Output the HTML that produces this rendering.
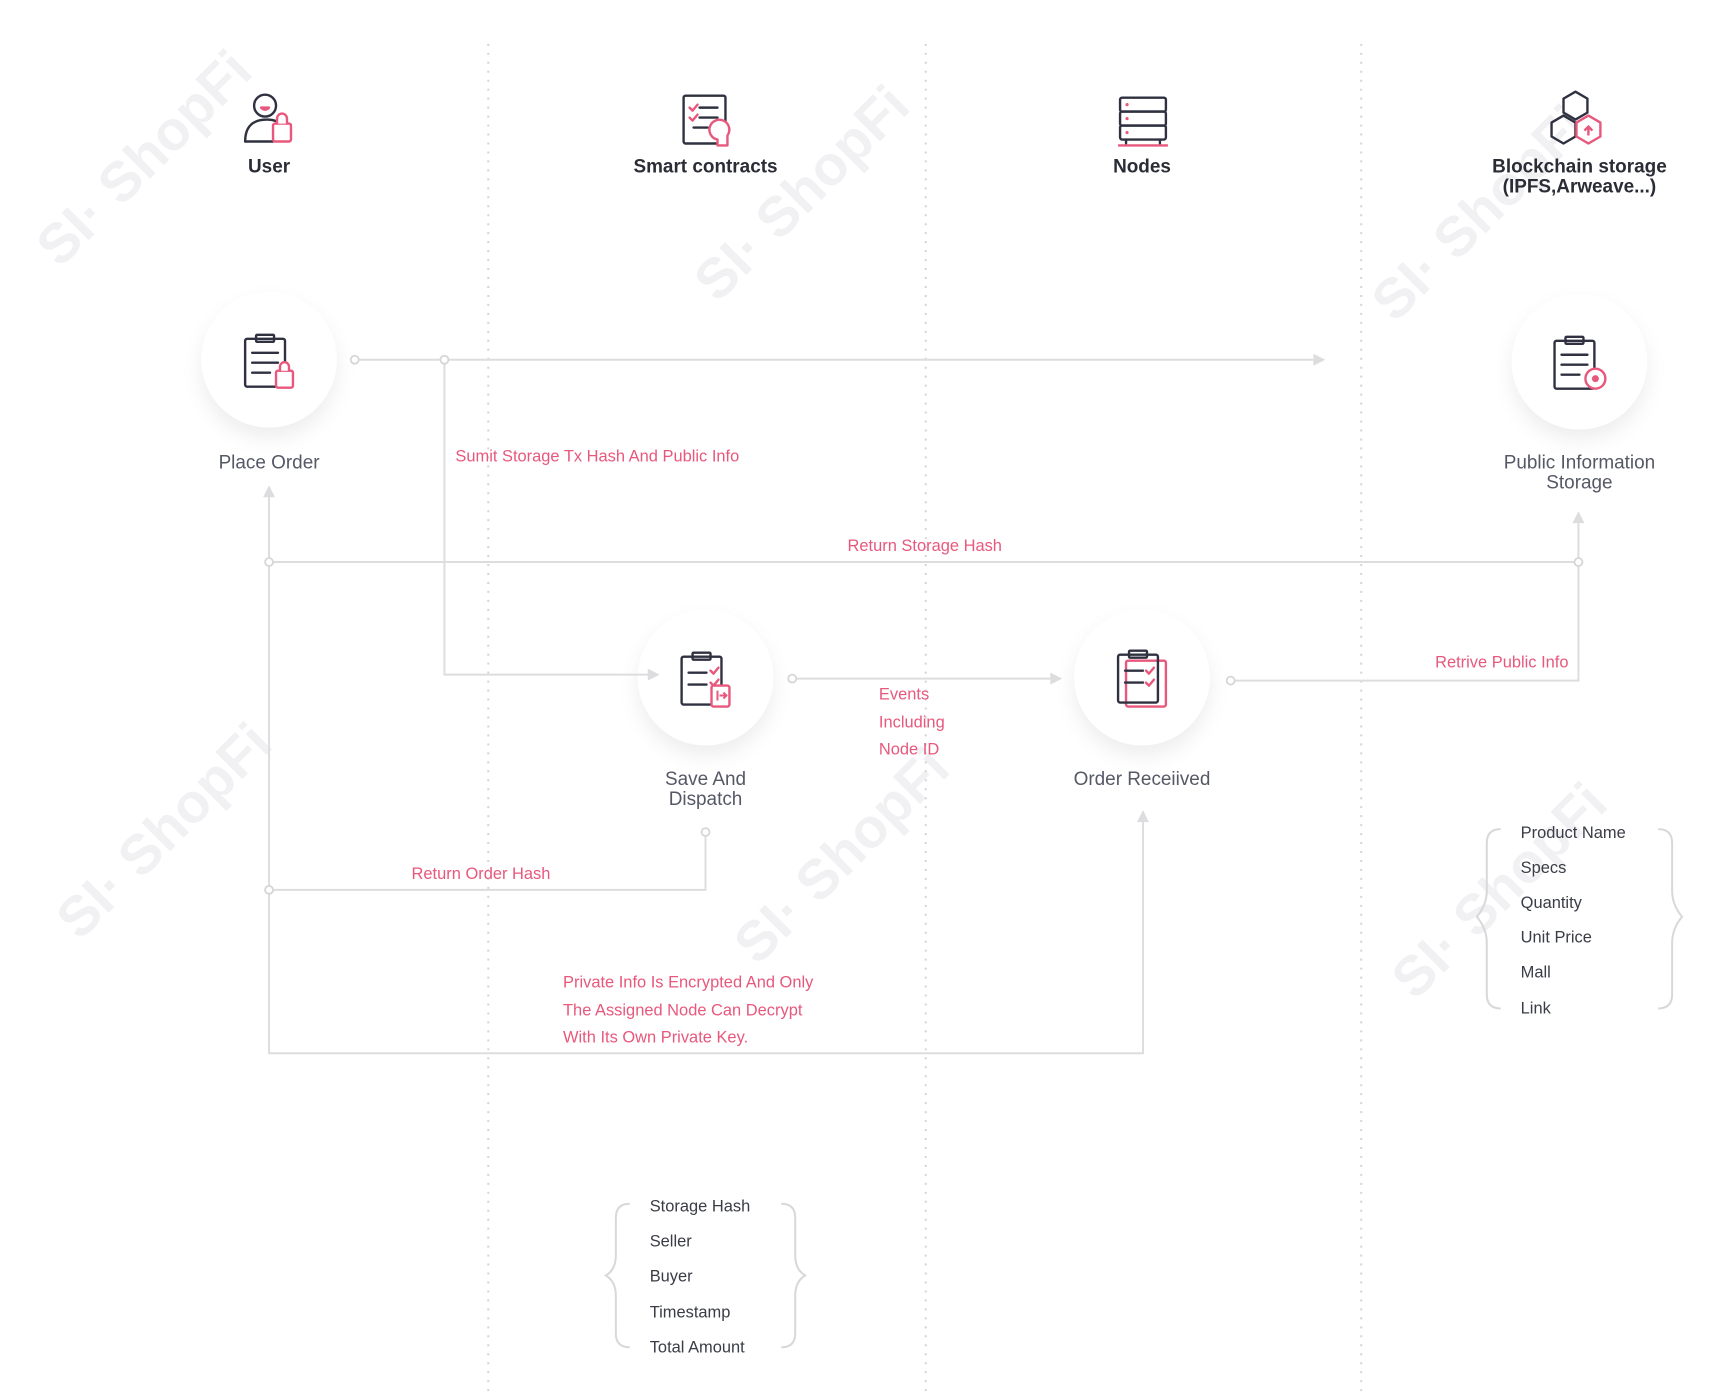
<!DOCTYPE html>
<html><head><meta charset="utf-8"><style>
html,body{margin:0;padding:0;background:#fff;width:1718px;height:1392px;overflow:hidden}
svg{display:block}
text{font-family:"Liberation Sans",sans-serif}
.h{font-weight:bold;font-size:19px;fill:#2a2c36;text-anchor:middle}
.l{font-size:19px;fill:#555966;text-anchor:middle}
.p{font-size:16.5px;fill:#e8587c}
.t{font-size:16.5px;fill:#3a3c46}
.wm{font-size:56px;font-weight:bold;fill:#f1f1f3}
.ln{stroke:#dddddf;stroke-width:2;fill:none}
.ic{stroke:#2f3140;stroke-width:2.4;fill:none;stroke-linecap:round;stroke-linejoin:round}
.pk{stroke:#e8587c;stroke-width:2.4;fill:#fff;stroke-linecap:round;stroke-linejoin:round}
</style></head><body>
<svg width="1718" height="1392" viewBox="0 0 1718 1392" xmlns="http://www.w3.org/2000/svg">
<defs>
<filter id="sh" x="-50%" y="-50%" width="200%" height="200%"><feDropShadow dx="0" dy="10" stdDeviation="10" flood-color="#000" flood-opacity="0.07"/></filter>
</defs>
<g transform="scale(0.9965)">
<g class="wm">
<text transform="translate(60,270) rotate(-45)">SI· ShopFi</text>
<text transform="translate(720,305) rotate(-45)">SI· ShopFi</text>
<text transform="translate(1400,325) rotate(-45)">SI· ShopFi</text>
<text transform="translate(80,945) rotate(-45)">SI· ShopFi</text>
<text transform="translate(760,970) rotate(-45)">SI· ShopFi</text>
<text transform="translate(1420,1005) rotate(-45)">SI· ShopFi</text>
</g>
<g stroke="#d4d4d8" stroke-width="2" stroke-dasharray="2,7">
<line x1="490" y1="44" x2="490" y2="1400"/>
<line x1="929" y1="44" x2="929" y2="1400"/>
<line x1="1366" y1="44" x2="1366" y2="1400"/>
</g>
<g fill="#fff" filter="url(#sh)">
<circle cx="270" cy="361" r="68"/>
<circle cx="1585" cy="363" r="68"/>
<circle cx="708" cy="680" r="68"/>
<circle cx="1146" cy="680" r="68"/>
</g>
<g class="ln">
<polyline points="360,361 1320,361"/>
<polyline points="446,361 446,677 652,677"/>
<polyline points="270,497 270,1057 1147,1057 1147,823"/>
<polyline points="270,564 1584,564"/>
<polyline points="1584,523 1584,683 1239,683"/>
<polyline points="799,681 1056,681"/>
<polyline points="708,840 708,893 270,893"/>
</g>
<g fill="#dddddf">
<polygon points="1318,355 1330,361 1318,367"/>
<polygon points="650,671 662,677 650,683"/>
<polygon points="1054,675 1066,681 1054,687"/>
<polygon points="264,499 270,487 276,499"/>
<polygon points="1578,525 1584,513 1590,525"/>
<polygon points="1141,825 1147,813 1153,825"/>
</g>
<g fill="#fff" stroke="#d6d6d8" stroke-width="1.8">
<circle cx="356" cy="361" r="4"/><circle cx="446" cy="361" r="4"/>
<circle cx="270" cy="564" r="4"/><circle cx="1584" cy="564" r="4"/>
<circle cx="795" cy="681" r="4"/><circle cx="1235" cy="683" r="4"/>
<circle cx="708" cy="835" r="4"/><circle cx="270" cy="893" r="4"/>
</g>
<g transform="translate(244,92)">
<circle class="ic" cx="22" cy="14" r="11"/><path class="pk" d="M18 16 q4 4 8 0 z" fill="#e8587c"/>
<path class="ic" d="M2 50 q0-22 22-22 q10 0 16 6"/><path class="ic" d="M2 50 h28"/>
<rect class="pk" x="30" y="32" width="18" height="18" rx="2"/><path class="pk" d="M34 32 v-5 a5 5 0 0 1 10 0 v5"/>
</g>
<g transform="translate(684,94)">
<rect class="ic" x="2" y="2" width="42" height="48" rx="2"/>
<path class="ic" d="M18 14 h18 M18 24 h18 M12 34 h14"/>
<path class="pk" d="M8 14 l3 3 l5 -6 M8 24 l3 3 l5 -6"/>
<path class="pk" d="M36 52 v-6 a10 10 0 1 1 10 -4 l0 10 z"/>
</g>
<g transform="translate(1122,96)">
<rect class="ic" x="2" y="2" width="46" height="14" rx="2"/><rect class="ic" x="2" y="16" width="46" height="14" rx="2"/><rect class="ic" x="2" y="30" width="46" height="14" rx="2"/>
<circle cx="9" cy="9" r="1.6" fill="#e8587c"/><circle cx="9" cy="23" r="1.6" fill="#e8587c"/><circle cx="9" cy="37" r="1.6" fill="#e8587c"/>
<path d="M8 44 v4 M42 44 v4" class="ic"/><path d="M0 50 h50" stroke="#e8587c" stroke-width="2.4"/>
</g>
<g transform="translate(1555,90)">
<polygon class="ic" points="26,2 38,9 38,23 26,30 14,23 14,9"/>
<polygon class="ic" points="14,26 26,33 26,47 14,54 2,47 2,33"/>
<polygon class="pk" points="39,26 51,33 51,47 39,54 27,47 27,33"/>
<path d="M39 46 v-8 M35 41 l4 -4 l4 4" stroke="#e8587c" stroke-width="2.4" fill="none"/>
</g>
<g transform="translate(246,336)">
<rect class="ic" x="0" y="4" width="40" height="48" rx="2"/><rect class="ic" x="11" y="0" width="18" height="7" rx="1" fill="#fff"/>
<path class="ic" d="M7 18 h26 M7 28 h26 M7 38 h18"/>
<rect class="pk" x="31" y="36" width="17" height="17" rx="2"/><path class="pk" d="M35 36 v-4 a4.5 4.5 0 0 1 9 0 v4"/>
</g>
<g transform="translate(1560,338)">
<rect class="ic" x="0" y="4" width="40" height="48" rx="2"/><rect class="ic" x="11" y="0" width="18" height="7" rx="1" fill="#fff"/>
<path class="ic" d="M7 18 h26 M7 28 h26 M7 38 h18"/>
<circle class="pk" cx="41" cy="42" r="10"/><circle cx="41" cy="42" r="3.5" fill="#e8587c"/>
</g>
<g transform="translate(684,655)">
<rect class="ic" x="0" y="4" width="40" height="48" rx="2"/><rect class="ic" x="11" y="0" width="18" height="7" rx="1" fill="#fff"/>
<path class="ic" d="M7 20 h18 M7 32 h18"/>
<path class="pk" d="M29 18 l3 3 l5 -6 M29 30 l3 3 l5 -6"/>
<rect class="pk" x="30" y="33" width="18" height="21" rx="2"/><path d="M36 38 v10 M38 43 h6 M42 40 l3 3 l-3 3" stroke="#e8587c" stroke-width="2" fill="none"/>
</g>
<g transform="translate(1122,653)">
<rect class="pk" x="8" y="10" width="40" height="46" rx="2"/>
<rect class="ic" x="0" y="4" width="40" height="48" rx="2" fill="#fff"/><rect class="ic" x="11" y="0" width="18" height="7" rx="1" fill="#fff"/>
<path class="ic" d="M7 20 h18 M7 32 h18"/>
<path class="pk" d="M28 20 l3 3 l5 -6 M28 32 l3 3 l5 -6"/>
</g>
<text class="h" x="270" y="173">User</text>
<text class="h" x="708" y="173">Smart contracts</text>
<text class="h" x="1146" y="173">Nodes</text>
<text class="h" x="1585" y="173">Blockchain storage</text>
<text class="h" x="1585" y="193">(IPFS,Arweave...)</text>
<text class="l" x="270" y="470">Place Order</text>
<text class="l" x="1585" y="470">Public Information</text>
<text class="l" x="1585" y="490">Storage</text>
<text class="l" x="708" y="788">Save And</text>
<text class="l" x="708" y="808">Dispatch</text>
<text class="l" x="1146" y="788">Order Receiived</text>
<text class="p" x="457" y="463">Sumit Storage Tx Hash And Public Info</text>
<text class="p" x="928" y="553" text-anchor="middle">Return Storage Hash</text>
<text class="p" x="1574" y="670" text-anchor="end">Retrive Public Info</text>
<text class="p" x="882" y="702">Events</text>
<text class="p" x="882" y="730">Including</text>
<text class="p" x="882" y="757">Node ID</text>
<text class="p" x="413" y="882">Return Order Hash</text>
<text class="p" x="565" y="991">Private Info Is Encrypted And Only</text>
<text class="p" x="565" y="1019">The Assigned Node Can Decrypt</text>
<text class="p" x="565" y="1046">With Its Own Private Key.</text>
<g class="t">
<text x="1526" y="841">Product Name</text>
<text x="1526" y="876">Specs</text>
<text x="1526" y="911">Quantity</text>
<text x="1526" y="946">Unit Price</text>
<text x="1526" y="981">Mall</text>
<text x="1526" y="1017">Link</text>
<text x="652" y="1216">Storage Hash</text>
<text x="652" y="1251">Seller</text>
<text x="652" y="1286">Buyer</text>
<text x="652" y="1322">Timestamp</text>
<text x="652" y="1357">Total Amount</text>
</g>
<g stroke="#d8d8da" stroke-width="2" fill="none">
<path d="M1506 832 q-14 0 -14 14 v48 q0 14 -10 26 q10 12 10 26 v52 q0 14 14 14"/>
<path d="M1664 832 q14 0 14 14 v48 q0 14 10 26 q-10 12 -10 26 v52 q0 14 -14 14"/>
<path d="M632 1208 q-14 0 -14 14 v38 q0 14 -10 20 q10 6 10 20 v38 q0 14 14 14"/>
<path d="M784 1208 q14 0 14 14 v38 q0 14 10 20 q-10 6 -10 20 v38 q0 14 -14 14"/>
</g>
</g>
</svg>
</body></html>
